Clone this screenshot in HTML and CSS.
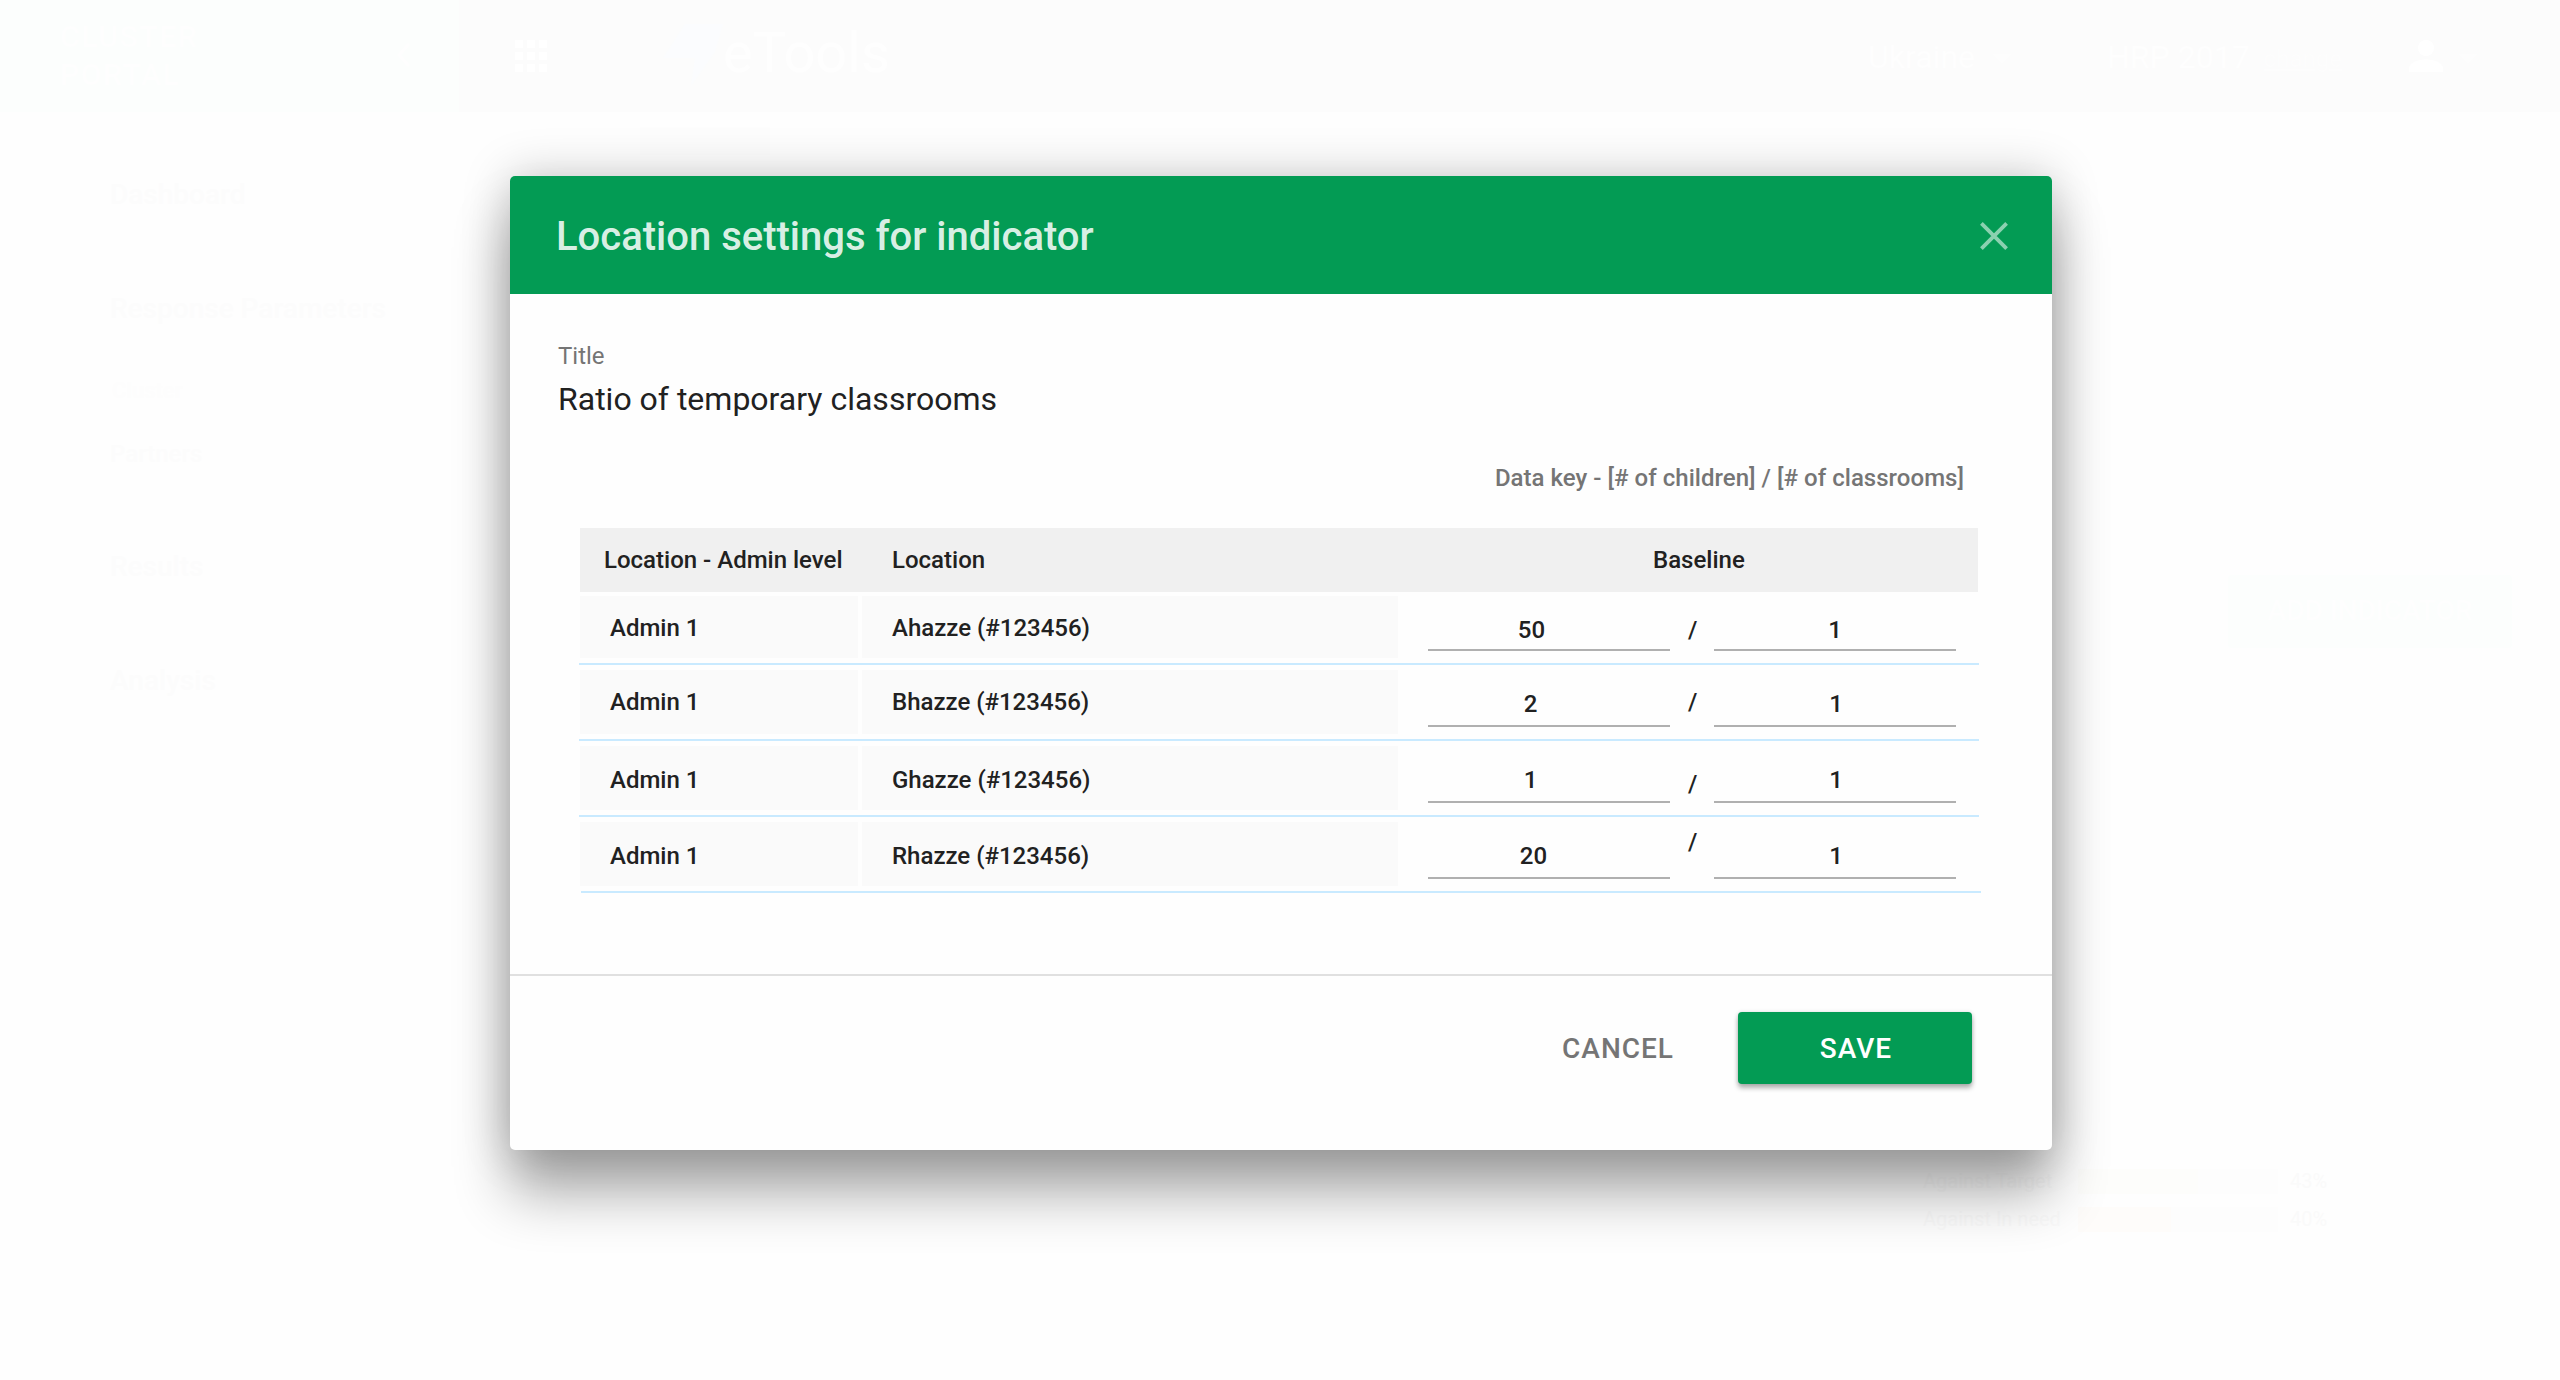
FILE: index.html
```
<!DOCTYPE html>
<html lang="en">
<head>
<meta charset="utf-8">
<title>Location settings for indicator</title>
<link rel="stylesheet" href="styles.css">
</head>
<body>
<div class="app">
  <aside class="sidebar">
    <div class="brand">
      <div class="brand-name">CLUSTER<br>PORTAL</div>
      <svg class="brand-chevron" width="14" height="24" viewBox="0 0 14 24"><path d="M12 1L2 12L12 23" fill="none" stroke="#fefefe" stroke-width="3"/></svg>
    </div>
    <nav class="nav">
      <div class="nav-item">Dashboard</div>
      <div class="nav-item">Response Parameters</div>
      <div class="nav-group">Cluster</div>
      <div class="nav-item nav-small">Partners</div>
      <div class="nav-item">Results</div>
      <div class="nav-item">Analysis</div>
    </nav>
  </aside>
  <div class="content">
    <header class="topbar">
      <svg class="apps" width="32" height="32" viewBox="0 0 32 32" fill="#fff"><path d="M0 0h8v8H0zM12 0h8v8h-8zM24 0h8v8h-8zM0 12h8v8H0zM12 12h8v8h-8zM24 12h8v8h-8zM0 24h8v8H0zM12 24h8v8h-8zM24 24h8v8h-8z"/></svg>
      <svg class="logo" width="64" height="64" viewBox="0 0 64 64"><path d="M24 0H62L54 28L30 62L34 34H2Z" fill="#fbfcfe"/></svg>
      <div class="wordmark">eTools</div>
      <div class="top-item country">Ukraine</div>
      <svg class="caret" width="18" height="9" viewBox="0 0 18 9"><path d="M0 0H18L9 9Z" fill="#fdfdfd"/></svg>
      <div class="top-item plan">HRP 2017</div>
      <div class="change">change</div>
      <svg class="person" width="34" height="32" viewBox="0 0 34 32" fill="#fff"><circle cx="17" cy="8" r="8"/><path d="M0 32V28C0 22 10 19.500 17 19.500S34 22 34 28V32Z"/></svg>
      <svg class="caret" width="18" height="9" viewBox="0 0 18 9"><path d="M0 0H18L9 9Z" fill="#fdfdfd"/></svg>
    </header>
    <main class="page">
      <div class="chip">ACTIVITY</div>
      <div class="add-button">ADD INDICATOR</div>
      <div class="progress">
        <span>Against Target</span><div class="track"><div class="fill fill-target"></div></div><span>43%</span>
        <span>Against In need</span><div class="track"><div class="fill fill-need"></div></div><span>40%</span>
      </div>
    </main>
  </div>
</div>

<section class="dialog" role="dialog">
  <header class="dialog-head">
    <h1 class="dialog-title">Location settings for indicator</h1>
    <svg class="close" width="28" height="28" viewBox="0 0 28 28"><path d="M1.400 1.400L26.600 26.600M26.600 1.400L1.400 26.600" stroke="#fff" stroke-opacity=".54" stroke-width="3.800" fill="none"/></svg>
  </header>
  <div class="dialog-body">
    <div class="label">Title</div>
    <div class="value">Ratio of temporary classrooms</div>
    <div class="data-key">Data key - [# of children] / [# of classrooms]</div>
    <div class="table">
      <div class="table-head">
        <div class="th-level">Location - Admin level</div>
        <div class="th-location">Location</div>
        <div class="th-baseline">Baseline</div>
      </div>
      <div class="row row-first">
        <div class="cell level">Admin 1</div>
        <div class="cell location">Ahazze (#123456)</div>
        <div class="field numerator n-50">50</div>
        <div class="slash">/</div>
        <div class="field denominator d-first">1</div>
      </div>
      <div class="rule"></div>
      <div class="row">
        <div class="cell level">Admin 1</div>
        <div class="cell location">Bhazze (#123456)</div>
        <div class="field numerator n-2">2</div>
        <div class="slash slash-2">/</div>
        <div class="field denominator">1</div>
      </div>
      <div class="rule"></div>
      <div class="row row-low">
        <div class="cell level">Admin 1</div>
        <div class="cell location">Ghazze (#123456)</div>
        <div class="field numerator n-1">1</div>
        <div class="slash slash-3">/</div>
        <div class="field denominator">1</div>
      </div>
      <div class="rule"></div>
      <div class="row row-low">
        <div class="cell level">Admin 1</div>
        <div class="cell location">Rhazze (#123456)</div>
        <div class="field numerator n-20">20</div>
        <div class="slash slash-4">/</div>
        <div class="field denominator">1</div>
      </div>
      <div class="rule rule-last"></div>
    </div>
  </div>
  <footer class="dialog-foot">
    <button class="btn btn-cancel">CANCEL</button>
    <button class="btn btn-save">SAVE</button>
  </footer>
</section>
</body>
</html>
```
FILE: styles.css
```
* { box-sizing: border-box; }

body {
  margin: 0;
  background: #fefefe;
  font-family: Roboto, "Liberation Sans", sans-serif;
  color: #212121;
}

/* Washed-out application behind the dialog */
.app { display: flex; width: 2560px; height: 1380px; overflow: hidden; }
.sidebar { width: 459px; }
.brand {
  display: flex;
  justify-content: space-between;
  height: 112px;
  padding: 18px 48px 0 60px;
  background: #fcfefd;
  color: #fefefe;
}
.brand-name { font-size: 30px; font-weight: 500; line-height: 38px; letter-spacing: 1.6px; }
.brand-chevron { margin-top: 25px; }
.nav { padding: 63px 0 0 110px; color: #fcfcfc; font-weight: 500; }
.nav-item { height: 40px; margin-bottom: 74px; font-size: 28px; line-height: 40px; }
.nav-item.nav-small { margin-bottom: 73px; font-size: 24px; }
.nav-group { height: 26px; margin: -25px 0 30px 2px; font-size: 22px; line-height: 26px; color: #fdfdfd; }

.content { flex: 1; display: flex; flex-direction: column; }
.topbar { display: flex; height: 112px; padding-left: 56px; background: #fcfcfc; color: #fefefe; }
.apps { margin-top: 40px; }
.logo { margin: 24px 0 0 114px; }
.wordmark { width: 174px; margin: 18px 0 0 -2px; font-size: 56px; line-height: 70px; }
.top-item { margin-top: 38px; font-size: 32px; line-height: 38px; }
.country { width: 125px; margin-left: 971px; }
.caret { margin-top: 54px; }
.plan { margin-left: 96px; }
.change { margin: 45px 0 0 14px; font-size: 24px; line-height: 28px; text-decoration: underline; color: #fdfdfd; }
.person { margin: 40px 16px 0 67px; }

.page { flex: 1; display: flex; flex-direction: column; padding: 15px 0 0 181px; }
.chip { width: 130px; height: 28px; padding-left: 20px; background: rgba(0, 0, 0, .005); color: #fdfdfd; font-size: 20px; line-height: 26px; }
.add-button {
  width: 284px;
  height: 73px;
  margin: 420px 48px 0 auto;
  border-radius: 4px;
  background: #fcfefd;
  color: #fefefe;
  font-size: 28px;
  font-weight: 500;
  line-height: 72px;
  text-align: center;
}
.progress {
  display: grid;
  grid-template-columns: 143px 200px 50px;
  grid-template-rows: 25px 25px;
  gap: 13px 12px;
  width: 511px;
  height: 82px;
  margin: 511px 126px 0 auto;
  padding-top: 10px;
  color: #fafafa;
  font-size: 20px;
  line-height: 25px;
}
.track { background: #fdfdfd; }
.fill { height: 25px; }
.fill-target { width: 120px; background: #fdfdfb; }
.fill-need { width: 93px; background: #fefcfa; }

/* Dialog */
.dialog {
  position: absolute;
  left: 510px;
  top: 176px;
  width: 1542px;
  height: 974px;
  border-radius: 5px;
  background: #fefefe;
  box-shadow: 0 0 48px rgba(0, 0, 0, .22), 0 44px 56px rgba(0, 0, 0, .32);
}
.dialog-head {
  display: flex;
  justify-content: space-between;
  align-items: flex-start;
  height: 118px;
  padding: 0 44px 0 46px;
  border-radius: 5px 5px 0 0;
  background: #039b54;
}
.dialog-title { margin: 0; padding-top: 37px; font-size: 40px; font-weight: 500; line-height: 48px; color: rgba(255, 255, 255, .87); }
.close { margin-top: 46px; }

.dialog-body { height: 680px; padding: 48px 71px 0 47px; }
.label { margin-left: 1px; font-size: 24px; line-height: 28px; color: #757575; }
.value { margin: 10px 0 0 1px; font-size: 32px; line-height: 38px; }
.data-key { margin: 46px 17px 0 0; text-align: right; font-size: 24px; font-weight: 500; line-height: 28px; letter-spacing: .03px; color: #757575; }

.table { width: 1398px; margin: 36px 0 0 23px; font-size: 24px; font-weight: 500; line-height: 28px; }
.table-head { display: flex; height: 64px; padding: 18px 0 0 24px; background: #f0f0f0; }
.th-level { width: 288px; }
.th-location { width: 761px; }

.row { display: flex; padding: 5px 0; }
.row-first { padding-top: 4px; }
.cell { height: 64px; padding-top: 18px; background: #fafafa; }
.row-first .cell { height: 62px; }
.row-low .cell { padding-top: 20px; }
.level { width: 278px; margin-right: 4px; padding-left: 30px; }
.location { width: 536px; margin-right: 30px; padding-left: 30px; }
.field { width: 242px; height: 57px; padding-top: 20px; border-bottom: 2px solid #b0b0b0; text-align: center; }
.row-first .field { height: 55px; }
.numerator.n-50 { padding-right: 35px; }
.numerator.n-2 { padding-right: 37px; }
.numerator.n-1 { padding-right: 37px; }
.numerator.n-20 { padding-right: 31px; }
.denominator { padding-left: 2px; }
.denominator.d-first { padding-left: 0; }
.slash { width: 44px; padding: 20px 0 0 18px; }
.slash-2 { padding-top: 18px; }
.slash-3 { padding-top: 24px; }
.slash-4 { padding-top: 6px; }
.rule { height: 2px; margin: 0 -1px; background: #c9eaff; }
.rule-last { margin: 0 -3px 0 1px; }

.dialog-foot {
  display: flex;
  justify-content: flex-end;
  align-items: flex-start;
  gap: 26px;
  padding: 36px 80px 0 0;
  border-top: 2px solid #e0e0e0;
}
.btn {
  height: 72px;
  margin: 0;
  border: 0;
  border-radius: 4px;
  font-family: inherit;
  font-size: 28px;
  font-weight: 500;
  line-height: 72px;
  letter-spacing: 1px;
}
.btn-cancel { width: 190px; padding: 1px 0 0 2px; background: transparent; color: #757575; }
.btn-save {
  width: 234px;
  padding: 1px 0 0 2px;
  background: #039b54;
  color: #fff;
  box-shadow: 0 4px 5px rgba(0, 0, 0, .3), 0 0 4px rgba(0, 0, 0, .12);
}
```
